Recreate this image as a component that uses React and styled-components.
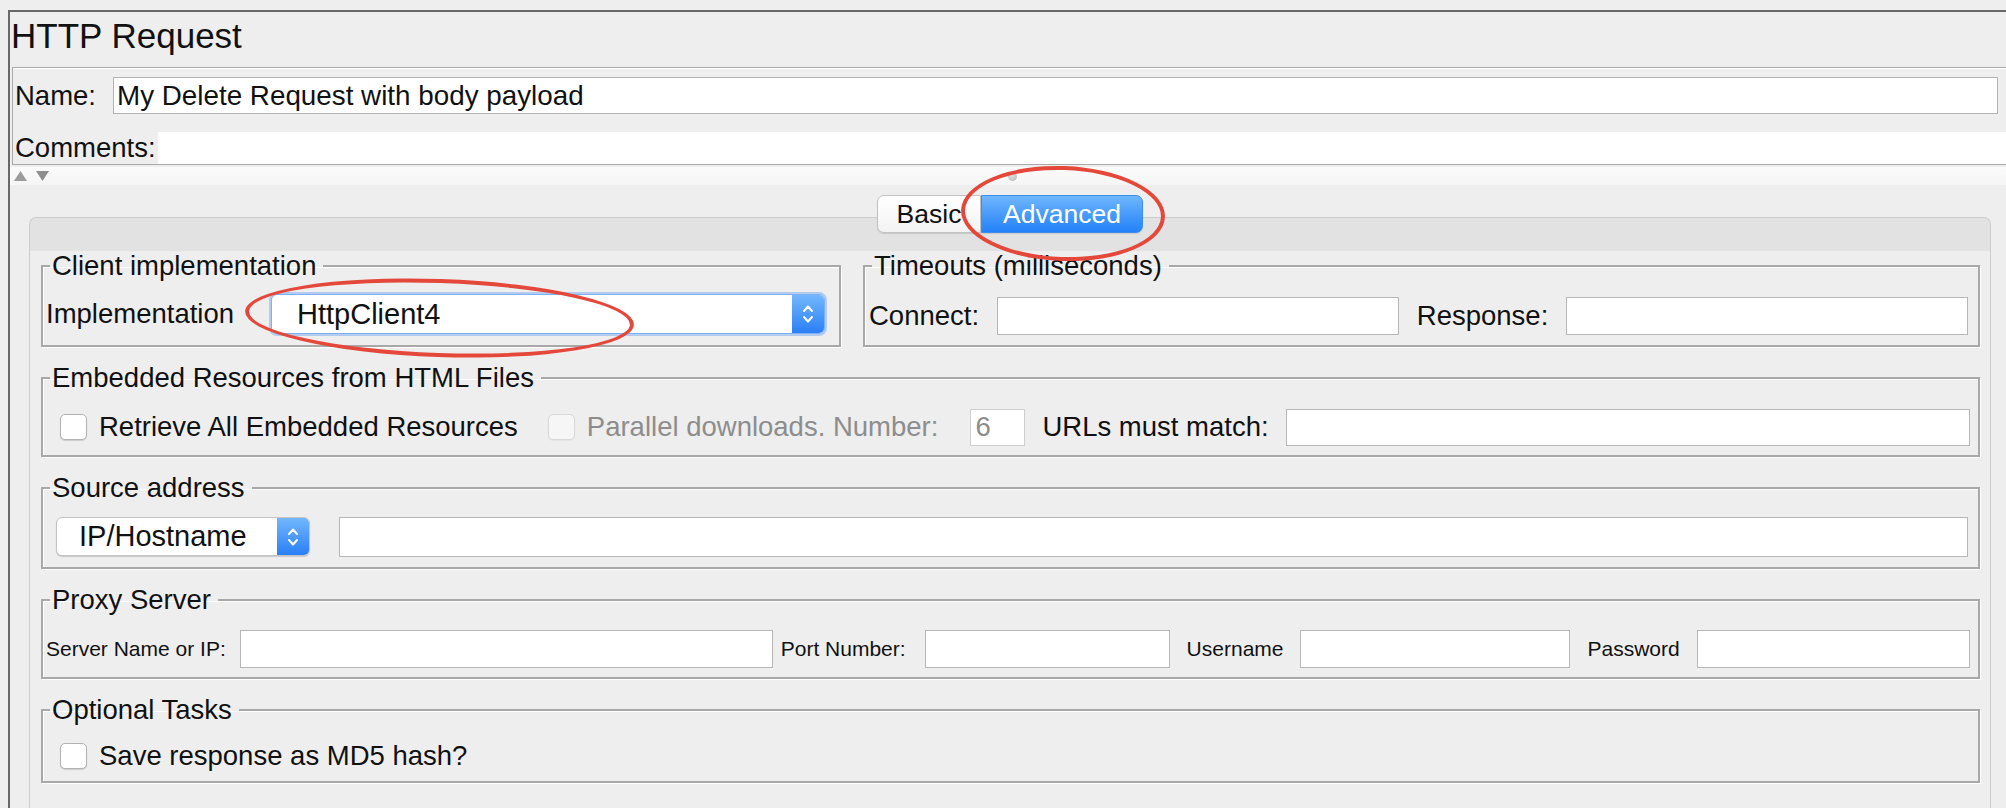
import React from "react";
import styled, { createGlobalStyle } from "styled-components";

const GlobalStyle = createGlobalStyle`
  html, body {
    margin: 0;
    padding: 0;
    background: #eeeeee;
  }
  body {
    font-family: "Liberation Sans", Arial, sans-serif;
    color: #111;
    overflow: hidden;
  }
  * {
    box-sizing: border-box;
  }
`;

const Page = styled.div`
  width: 2006px;
  height: 808px;
  overflow: hidden;
  background: #eeeeee;
  padding-top: 10px;
`;

const Frame = styled.div`
  margin-left: 8px;
  height: 798px;
  border-top: 2px solid #686868;
  border-left: 2px solid #686868;
  display: flex;
  flex-direction: column;
`;

const Title = styled.h1`
  margin: 0;
  height: 55px;
  flex: none;
  padding: 5px 0 0 1px;
  font-size: 35px;
  font-weight: normal;
  line-height: 38px;
  color: #111;
`;

const NamePanel = styled.div`
  margin-left: 2px;
  border: 1px solid #a9a9a9;
  border-right: none;
  box-shadow: inset 0 1px 0 #ffffff;
  padding: 9px 0 0 2px;
  display: flex;
  flex-direction: column;
  gap: 18px;
  flex: none;
`;

const FieldRow = styled.div`
  display: flex;
  align-items: center;
  height: ${(p) => p.$h}px;
`;

const RowLabel = styled.span`
  font-size: 27.5px;
  white-space: nowrap;
  margin-right: ${(p) => p.$gap}px;
`;

const NameInput = styled.input`
  flex: 1;
  min-width: 0;
  height: 37px;
  margin-right: 8px;
  border: 1px solid #b3b3b3;
  background: #fff;
  font-family: inherit;
  font-size: 27.8px;
  color: #111;
  padding: 0 3px;
  outline: none;
`;

const CommentArea = styled.div`
  flex: 1;
  height: 100%;
  background: #fff;
`;

const Divider = styled.div`
  margin-top: 2px;
  height: 18px;
  flex: none;
  background: linear-gradient(#fbfbfb, #f5f5f5);
  display: grid;
  grid-template-columns: 1fr auto 1fr;
  align-items: center;
  padding-left: 4px;
`;

const Grip = styled.span`
  width: 9px;
  height: 9px;
  border-radius: 50%;
  background: radial-gradient(circle at 40% 35%, #dedede, #b9b9b9);
  margin-left: 4px;
`;

const TabArea = styled.div`
  flex: 1;
  margin: 10px 15px 0 19px;
  display: flex;
  flex-direction: column;
`;

const TabBar = styled.div`
  display: flex;
  justify-content: center;
  margin-bottom: -16px;
  position: relative;
  z-index: 2;
  flex: none;
`;

const Tab = styled.div`
  position: relative;
  height: 38px;
  width: ${(p) => p.$w}px;
  display: flex;
  align-items: center;
  justify-content: center;
  font-size: 26.5px;
  color: ${(p) => (p.$active ? "#fff" : "#111")};
  background: ${(p) =>
    p.$active
      ? "linear-gradient(#6fb6fd, #2381f8)"
      : "linear-gradient(#ffffff, #f3f3f3)"};
  border: 1px solid ${(p) => (p.$active ? "#3d8cf0" : "#c2c2c2")};
  border-radius: ${(p) => (p.$active ? "0 7px 7px 0" : "7px 0 0 7px")};
  box-shadow: 0 1px 1px rgba(0, 0, 0, 0.12);
`;

const Pane = styled.div`
  flex: 1;
  background: #e2e2e2;
  border: 1px solid #cdcdcd;
  border-bottom: none;
  border-radius: 7px 7px 0 0;
  padding-top: 33px;
  display: flex;
  flex-direction: column;
`;

const Content = styled.div`
  flex: 1;
  background: #eeeeee;
  padding: 0 10px 0 11px;
  display: flex;
  flex-direction: column;
  gap: 16px;
`;

const TopRow = styled.div`
  display: grid;
  grid-template-columns: 800px 1fr;
  column-gap: 22px;
`;

const Group = styled.fieldset`
  margin: 0;
  padding: 0;
  min-width: 0;
  border: 2px solid #a8a8a8;
  box-shadow: 1px 1px 0 #fff, inset 1px 1px 0 #fff;
`;

const Legend = styled.legend`
  margin-left: 7px;
  padding: 0 7px 0 2px;
  font-size: 27.5px;
  line-height: 30px;
  color: #111;
`;

const GroupRow = styled.div`
  display: flex;
  align-items: center;
  height: ${(p) => p.$h}px;
  padding: ${(p) => p.$pt || 0}px ${(p) => p.$pr}px 0 ${(p) => p.$pl}px;
`;

const TimeoutRow = styled.div`
  display: grid;
  grid-template-columns: auto 1fr auto 1fr;
  column-gap: 18px;
  align-items: center;
  height: 64px;
  padding: 6px 10px 0 4px;
`;

const Label = styled.span`
  flex: none;
  white-space: nowrap;
  font-size: ${(p) => (p.$small ? 21 : 27.5)}px;
  margin-left: ${(p) => p.$ml || 0}px;
  color: ${(p) => (p.$muted ? "#8d8d8d" : "#111")};
`;

const TextBox = styled.input`
  height: ${(p) => p.$h || 38}px;
  width: ${(p) => (p.$w ? `${p.$w}px` : "auto")};
  flex: ${(p) => (p.$w ? "none" : 1)};
  min-width: 0;
  margin-left: ${(p) => p.$ml || 0}px;
  border: 1px solid ${(p) => (p.$muted ? "#cfcfcf" : "#b7b7b7")};
  background: #fff;
  font-family: inherit;
  font-size: 27.5px;
  color: ${(p) => (p.$muted ? "#8d8d8d" : "#111")};
  padding: 0 4px;
  outline: none;
`;

const CheckBox = styled.span`
  flex: none;
  width: 27px;
  height: 26px;
  margin-left: ${(p) => p.$ml || 0}px;
  border: 1px solid ${(p) => (p.$disabled ? "#d8d8d8" : "#b2b2b2")};
  border-radius: 5px;
  background: ${(p) => (p.$disabled ? "#f6f6f6" : "#fff")};
  box-shadow: 0 1px 1px rgba(0, 0, 0, ${(p) => (p.$disabled ? 0.04 : 0.14)});
`;

const Select = styled.div`
  position: relative;
  flex: none;
  display: flex;
  width: ${(p) => p.$w}px;
  height: ${(p) => p.$h}px;
  margin-left: ${(p) => (p.$auto ? "auto" : `${p.$ml || 0}px`)};
  background: #fff;
  border-radius: 6px;
  border: 1px solid ${(p) => (p.$focus ? "#7fb0f2" : "#c3c3c3")};
  box-shadow: ${(p) =>
    p.$focus
      ? "0 0 0 2px rgba(128, 176, 240, 0.55)"
      : "0 1px 1px rgba(0, 0, 0, 0.16)"};
`;

const SelectValue = styled.span`
  flex: 1;
  display: flex;
  align-items: center;
  padding-left: ${(p) => p.$pl}px;
  font-size: 29px;
  color: #111;
`;

const SelectButton = styled.span`
  width: 32px;
  flex: none;
  display: flex;
  align-items: center;
  justify-content: center;
  background: linear-gradient(#72b7fd, #2a7ff6);
  border-radius: 0 5px 5px 0;
`;

const Circle = styled.span`
  position: absolute;
  pointer-events: none;
  left: ${(p) => p.$x}px;
  top: ${(p) => p.$y}px;
  width: ${(p) => p.$w}px;
  height: ${(p) => p.$h}px;
  border: 4px solid #e4483b;
  border-radius: 50%;
  transform: rotate(${(p) => p.$r || 0}deg);
  z-index: 5;
`;

const Chevrons = () => (
  <svg width="14" height="24" viewBox="0 0 14 24">
    <path
      d="M3 9 L7 4.5 L11 9 M3 15 L7 19.5 L11 15"
      fill="none"
      stroke="#fff"
      strokeWidth="2"
      strokeLinecap="round"
      strokeLinejoin="round"
    />
  </svg>
);

const SplitArrows = () => (
  <svg width="36" height="10" viewBox="0 0 36 10">
    <polygon points="0,10 6.5,0 13,10" fill="#9b9b9b" />
    <polygon points="22,0 35,0 28.5,10" fill="#8e8e8e" />
  </svg>
);

const App = () => {
  return (
    <Page>
      <GlobalStyle />
      <Frame>
        <Title>HTTP Request</Title>
        <NamePanel>
          <FieldRow $h={37}>
            <RowLabel $gap={17}>Name:</RowLabel>
            <NameInput readOnly value="My Delete Request with body payload" />
          </FieldRow>
          <FieldRow $h={32}>
            <RowLabel $gap={2}>Comments:</RowLabel>
            <CommentArea />
          </FieldRow>
        </NamePanel>
        <Divider>
          <SplitArrows />
          <Grip />
          <span />
        </Divider>
        <TabArea>
          <TabBar>
            <Tab $w={104}>Basic</Tab>
            <Tab $w={162} $active>
              Advanced
              <Circle $x={-21} $y={-30} $w={204} $h={95} $r={2} />
            </Tab>
          </TabBar>
          <Pane>
            <Content>
              <TopRow>
                <Group>
                  <Legend>Client implementation</Legend>
                  <GroupRow $h={64} $pt={2} $pl={3} $pr={14}>
                    <Label>Implementation</Label>
                    <Select $w={554} $h={40} $auto $focus>
                      <SelectValue $pl={25}>HttpClient4</SelectValue>
                      <SelectButton>
                        <Chevrons />
                      </SelectButton>
                      <Circle $x={-27} $y={-16} $w={389} $h={78} $r={2} />
                    </Select>
                  </GroupRow>
                </Group>
                <Group>
                  <Legend>Timeouts (milliseconds)</Legend>
                  <TimeoutRow>
                    <Label>Connect:</Label>
                    <TextBox readOnly />
                    <Label>Response:</Label>
                    <TextBox readOnly />
                  </TimeoutRow>
                </Group>
              </TopRow>

              <Group>
                <Legend>Embedded Resources from HTML Files</Legend>
                <GroupRow $h={62} $pt={6} $pl={0} $pr={8}>
                  <CheckBox $ml={17} />
                  <Label $ml={12}>Retrieve All Embedded Resources</Label>
                  <CheckBox $ml={30} $disabled />
                  <Label $ml={12} $muted>
                    Parallel downloads. Number:
                  </Label>
                  <TextBox readOnly $w={55} $h={37} $ml={32} $muted value="6" />
                  <Label $ml={17}>URLs must match:</Label>
                  <TextBox readOnly $h={37} $ml={17} />
                </GroupRow>
              </Group>

              <Group>
                <Legend>Source address</Legend>
                <GroupRow $h={64} $pt={3} $pl={0} $pr={10}>
                  <Select $w={254} $h={39} $ml={13}>
                    <SelectValue $pl={22}>IP/Hostname</SelectValue>
                    <SelectButton>
                      <Chevrons />
                    </SelectButton>
                  </Select>
                  <TextBox readOnly $h={40} $ml={29} />
                </GroupRow>
              </Group>

              <Group>
                <Legend>Proxy Server</Legend>
                <GroupRow $h={62} $pt={6} $pl={0} $pr={8}>
                  <Label $small $ml={3}>
                    Server Name or IP:
                  </Label>
                  <TextBox readOnly $w={533} $ml={14} />
                  <Label $small $ml={8}>
                    Port Number:
                  </Label>
                  <TextBox readOnly $w={245} $ml={19} />
                  <Label $small $ml={17}>
                    Username
                  </Label>
                  <TextBox readOnly $w={270} $ml={17} />
                  <Label $small $ml={17}>
                    Password
                  </Label>
                  <TextBox readOnly $ml={17} />
                </GroupRow>
              </Group>

              <Group>
                <Legend>Optional Tasks</Legend>
                <GroupRow $h={56} $pt={6} $pl={0} $pr={8}>
                  <CheckBox $ml={17} />
                  <Label $ml={12}>Save response as MD5 hash?</Label>
                </GroupRow>
              </Group>
            </Content>
          </Pane>
        </TabArea>
      </Frame>
    </Page>
  );
};

export default App;
